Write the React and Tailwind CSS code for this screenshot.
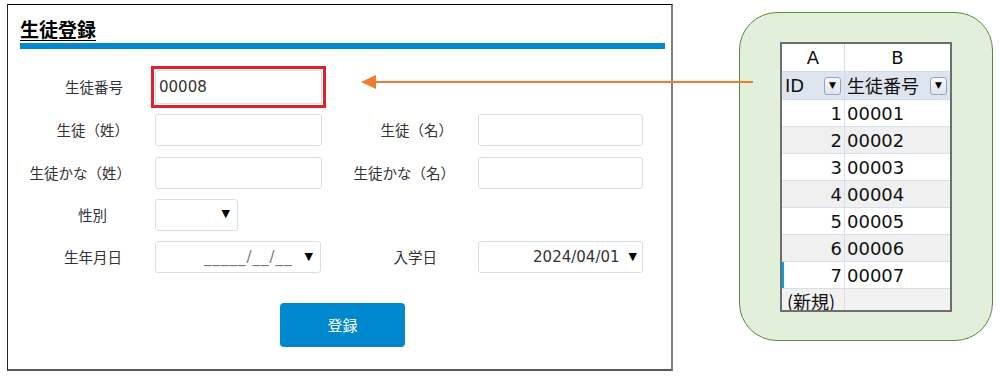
import React from "react";

const jp = { fontFamily: '"Noto Sans CJK JP", "Noto Sans", sans-serif' };
const num = { fontFamily: '"DejaVu Sans", "Noto Sans CJK JP", sans-serif' };

// フォームの1行
function Row({ h, left, right }) {
  return (
    <div className="flex items-center" style={{ height: h }}>
      {left}
      {right}
    </div>
  );
}

function Label({ w, pr, children }) {
  return (
    <div
      className="shrink-0 text-right text-[14.5px] text-[#333]"
      style={{ ...jp, width: w, paddingRight: pr }}
    >
      {children}
    </div>
  );
}

function Box({ w, children, className = "" }) {
  return (
    <div
      className={`flex h-[32px] shrink-0 items-center rounded-[3px] border border-[#d9dee5] bg-white text-[15px] text-[#333] ${className}`}
      style={{ ...num, width: w }}
    >
      {children}
    </div>
  );
}

const Tri = () => <span className="text-[11px] text-black" style={num}>▼</span>;

function FilterBtn() {
  return (
    <span className="flex h-[18px] w-[17px] items-center justify-center rounded-[3px] border border-[#8ea6c6] bg-gradient-to-b from-[#f7f9fb] to-[#dfe5ec]">
      <span className="text-[9px] leading-none text-black" style={num}>▼</span>
    </span>
  );
}

const rows = [1, 2, 3, 4, 5, 6, 7];

export default function App() {
  return (
    <div className="relative flex h-[377px] w-[1000px] overflow-hidden bg-white">
      {/* 生徒登録フォーム */}
      <div className="ml-[7px] mt-[4px] h-[367px] w-[666px] shrink-0 border-t border-l border-r-2 border-b-2 border-t-black border-l-[#222] border-r-[#7f7f7f] border-b-[#595959]">
        <div
          className="ml-[12px] mt-[12px] text-[19px] font-bold leading-[24px] text-black underline underline-offset-[3px]"
          style={jp}
        >
          生徒登録
        </div>
        <div className="ml-[12px] mt-[2px] h-[6px] w-[645px] bg-[#0288d1]" />

        <div className="mt-[17px]">
          <Row
            h={42}
            left={
              <>
                <Label w={143} pr={28}>生徒番号</Label>
                <div className="w-[175px] shrink-0 border-[3px] border-[#e0212b] p-[1px]">
                  <Box w={167} className="h-[34px] pl-[3px]">00008</Box>
                </div>
              </>
            }
          />
          <Row
            h={44}
            left={
              <>
                <Label w={143} pr={22}>生徒（姓）</Label>
                <div className="w-[175px] shrink-0 px-[4px]">
                  <Box w={167} />
                </div>
              </>
            }
            right={
              <>
                <Label w={152} pr={25}>生徒（名）</Label>
                <Box w={165} />
              </>
            }
          />
          <Row
            h={41}
            left={
              <>
                <Label w={143} pr={20}>生徒かな（姓）</Label>
                <div className="w-[175px] shrink-0 px-[4px]">
                  <Box w={167} />
                </div>
              </>
            }
            right={
              <>
                <Label w={152} pr={23}>生徒かな（名）</Label>
                <Box w={165} />
              </>
            }
          />
          <Row
            h={43}
            left={
              <>
                <Label w={143} pr={44}>性別</Label>
                <div className="w-[175px] shrink-0 px-[4px]">
                  <Box w={83} className="justify-end pr-[7px]">
                    <Tri />
                  </Box>
                </div>
              </>
            }
          />
          <Row
            h={42}
            left={
              <>
                <Label w={143} pr={29}>生年月日</Label>
                <div className="w-[175px] shrink-0 px-[4px]">
                  <Box w={166} className="justify-end gap-[12px] pr-[7px]">
                    <span className="text-[15px] tracking-[1px] text-[#777]">_____/__/__</span>
                    <Tri />
                  </Box>
                </div>
              </>
            }
            right={
              <>
                <Label w={152} pr={41}>入学日</Label>
                <Box w={165} className="justify-end gap-[9px] pr-[5px]">
                  <span>2024/04/01</span>
                  <Tri />
                </Box>
              </>
            }
          />
        </div>

        <button
          className="ml-[272px] mt-[25px] flex h-[44px] w-[125px] items-center justify-center rounded-[4px] bg-[#0088cf] text-[15px] text-white"
          style={jp}
        >
          登録
        </button>
      </div>

      {/* 矢印 */}
      <svg className="absolute left-[355px] top-[70px]" width="400" height="24" viewBox="0 0 400 24">
        <line x1="18" y1="12" x2="398" y2="12" stroke="#ed7d31" strokeWidth="2" />
        <polygon points="6,12 21,5 21,19" fill="#ed7d31" />
      </svg>

      {/* テーブル（Excel 風） */}
      <div className="ml-[66px] mt-[12px] h-[329px] w-[254px] shrink-0 rounded-[38px] border border-[#5b8a3c] bg-[#e2efda] pl-[40px] pt-[29px]">
        <div className="h-[270px] w-[172px] overflow-hidden border-2 border-[#6e6e6e] bg-white text-[18px] text-[#111]" style={num}>
          <div className="flex h-[28px] border-b border-[#cfdcec]">
            <div className="flex w-[63px] items-center justify-center border-r border-[#cfdcec]">A</div>
            <div className="flex flex-1 items-center justify-center">B</div>
          </div>
          <div className="flex h-[28px] border-b border-[#cfdcec] bg-[#dfe5ee]">
            <div className="flex w-[63px] items-center justify-between border-r border-[#cfdcec] pl-[3px] pr-[3px]">
              <span>ID</span>
              <FilterBtn />
            </div>
            <div className="flex flex-1 items-center justify-between pl-[2px] pr-[3px]">
              <span style={jp}>生徒番号</span>
              <FilterBtn />
            </div>
          </div>
          {rows.map((n) => (
            <div
              key={n}
              className={`relative flex h-[27px] border-b border-[#d6dfeb] ${n % 2 === 0 ? "bg-[#f0f0f0]" : "bg-white"}`}
            >
              {n === 7 && <span className="absolute left-0 top-0 h-full w-[2px] bg-[#00a2e8]" />}
              <div className="flex w-[63px] items-center justify-end border-r border-[#d6dfeb] pr-[2px]">{n}</div>
              <div className="flex flex-1 items-center pl-[2px]">0000{n}</div>
            </div>
          ))}
          <div className="flex h-[27px] bg-[#f2f2f2]">
            <div className="flex w-[63px] items-start border-r border-[#d6dfeb] pl-[5px] pt-[1px] leading-[22px]" style={jp}>(新規)</div>
            <div className="flex-1" />
          </div>
        </div>
      </div>
    </div>
  );
}
